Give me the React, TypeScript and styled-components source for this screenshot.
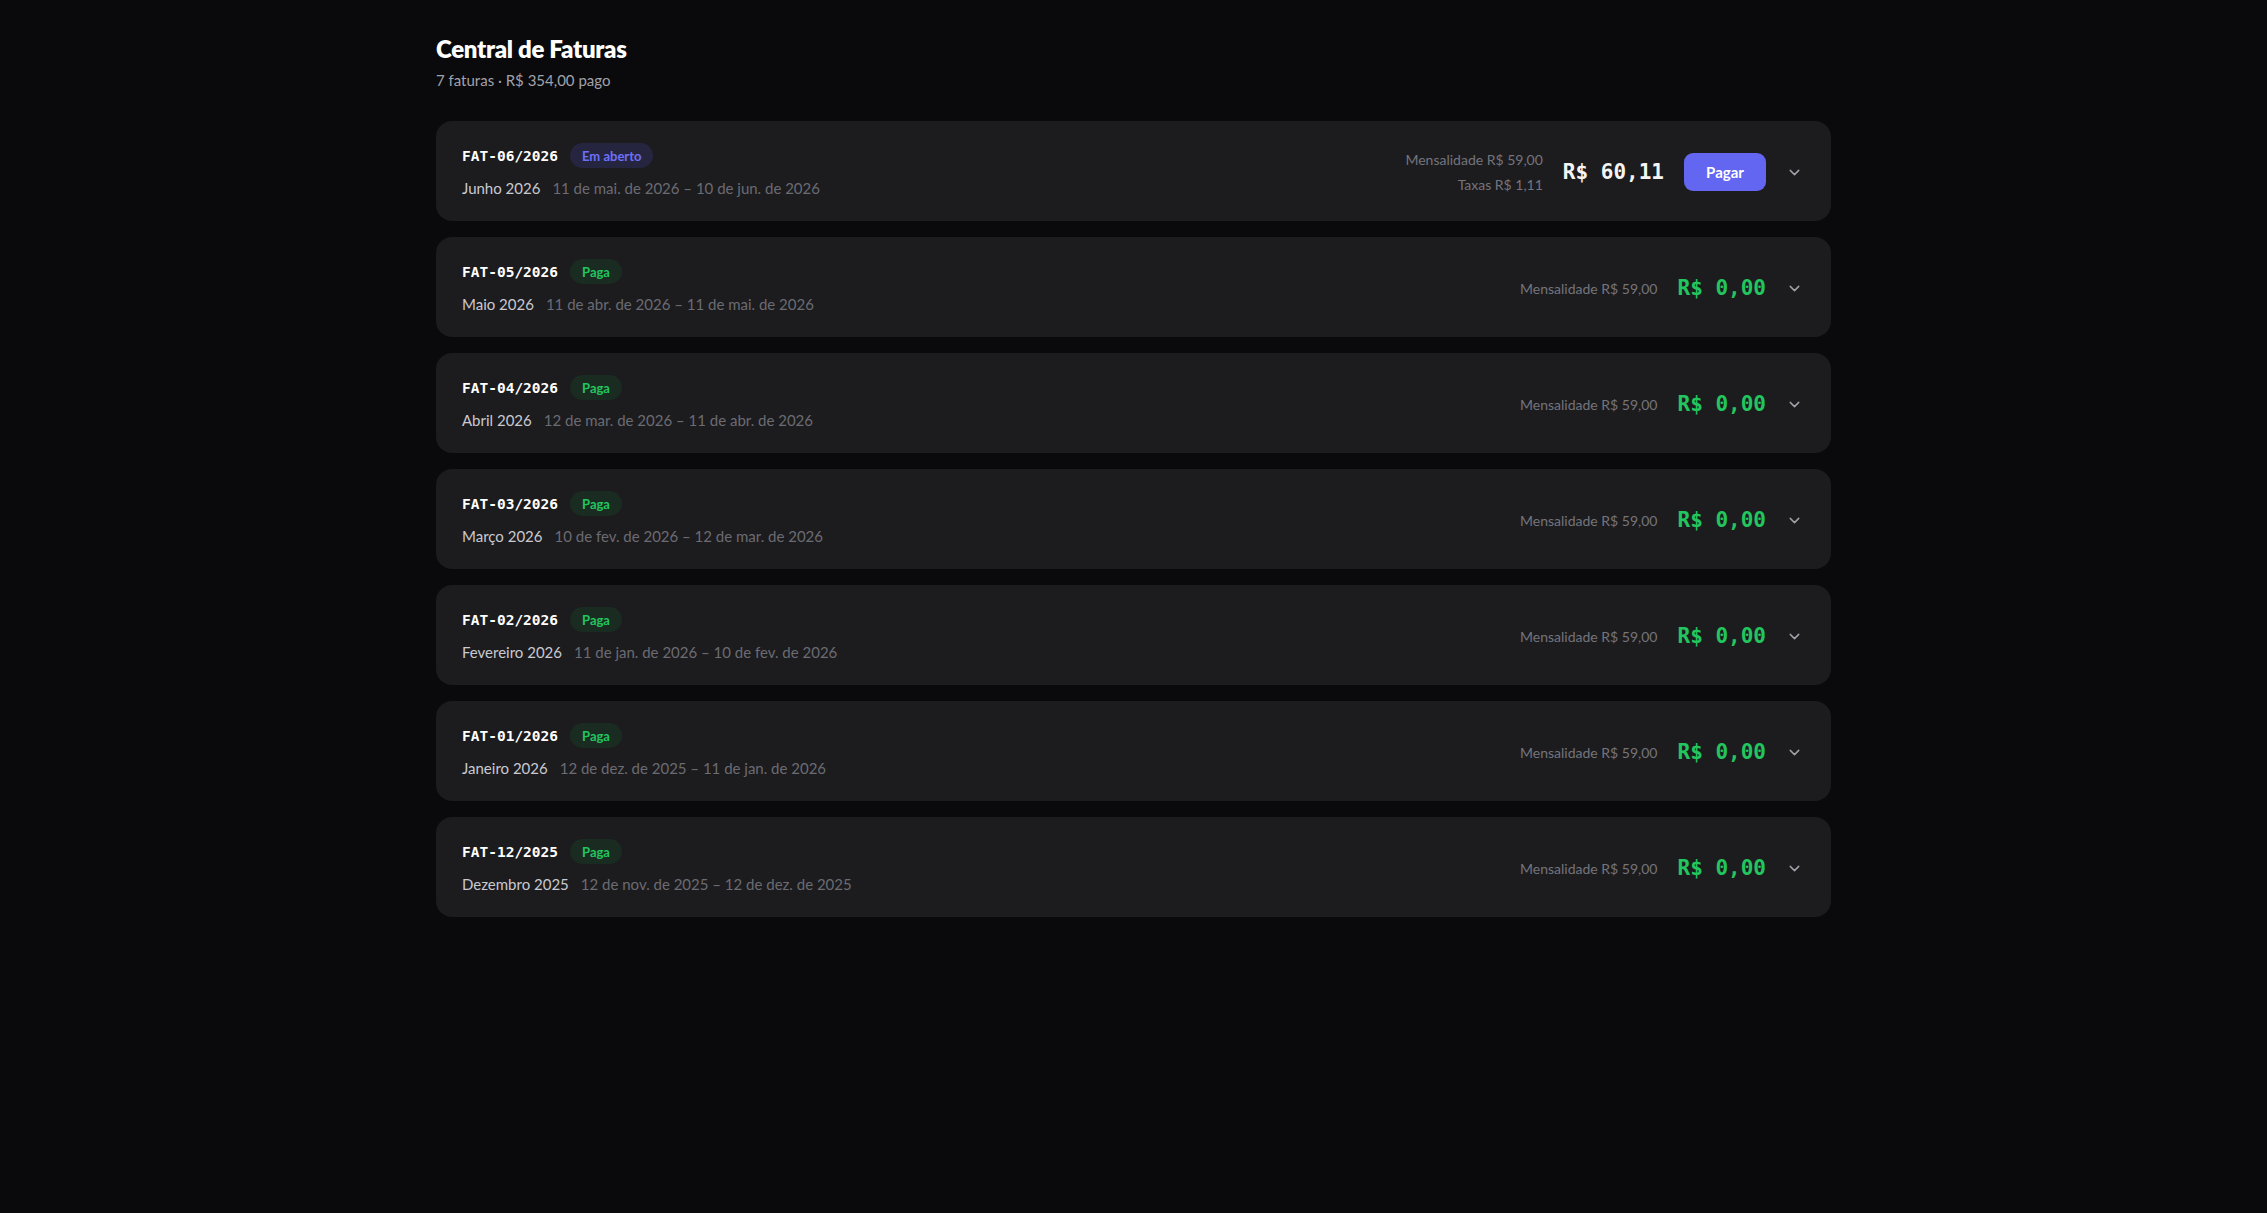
import React from 'react';
import styled, { createGlobalStyle } from 'styled-components';
import { ChevronDown } from 'lucide-react';

const GlobalStyle = createGlobalStyle`
  body {
    margin: 0;
    background: #0a0a0c;
    color: #f4f4f5;
    font-family: Lato, "Noto Sans", sans-serif;
  }
`;

const Page = styled.main`
  width: 1395px;
  margin: 0 auto;
  padding: 34px 0 60px;
  box-sizing: border-box;
`;

const Header = styled.header`
  margin-bottom: 31px;
`;

const Title = styled.h1`
  margin: 0;
  font-size: 24px;
  line-height: 30px;
  font-weight: 800;
  letter-spacing: -0.3px;
  color: #ffffff;
`;

const Subtitle = styled.p`
  margin: 6px 0 0;
  font-size: 15px;
  line-height: 20px;
  color: #a1a1aa;
`;

const List = styled.div`
  display: flex;
  flex-direction: column;
  gap: 16px;
`;

const Card = styled.div`
  display: flex;
  align-items: center;
  justify-content: space-between;
  height: 100px;
  padding: 0 28px 0 26px;
  box-sizing: border-box;
  background: #1c1c1e;
  border-radius: 16px;
`;

const Info = styled.div`
  display: flex;
  flex-direction: column;
  gap: 11px;
  margin-top: -2px;
`;

const TopLine = styled.div`
  display: flex;
  align-items: center;
  gap: 12px;
`;

const Code = styled.span`
  font-family: "DejaVu Sans Mono", "Liberation Mono", monospace;
  font-weight: 700;
  font-size: 14.5px;
  color: #ffffff;
`;

const Badge = styled.span<{ $open?: boolean }>`
  display: inline-flex;
  align-items: center;
  height: 25px;
  padding: 0 12px;
  border-radius: 999px;
  font-size: 13px;
  font-weight: 700;
  color: ${p => (p.$open ? '#6d70f7' : '#22c55e')};
  background: ${p => (p.$open ? '#26253f' : '#1a2b21')};
`;

const Period = styled.div`
  display: flex;
  align-items: baseline;
  gap: 12px;
  font-size: 15px;
`;

const Month = styled.span`
  color: #c9c9d1;
`;

const Range = styled.span`
  color: #6b6b73;
`;

const Side = styled.div`
  display: flex;
  align-items: center;
  gap: 20px;
  margin-top: 2px;
`;

const Breakdown = styled.div`
  display: flex;
  flex-direction: column;
  align-items: flex-end;
  gap: 8px;
  font-size: 14px;
  color: #74747c;
`;

const Amount = styled.span<{ $paid?: boolean }>`
  font-family: "DejaVu Sans Mono", "Liberation Mono", monospace;
  font-weight: 700;
  font-size: 21px;
  color: ${p => (p.$paid ? '#22c55e' : '#f4f4f5')};
`;

const PayButton = styled.button`
  width: 82px;
  height: 38px;
  border: none;
  border-radius: 9px;
  background: #6366f1;
  color: #ffffff;
  font-family: inherit;
  font-size: 15px;
  font-weight: 700;
  cursor: pointer;
`;

const Toggle = styled.span`
  display: inline-flex;
  color: #a1a1aa;
`;

interface Invoice {
  code: string;
  month: string;
  range: string;
  open?: boolean;
  fees?: string;
  total: string;
}

const invoices: Invoice[] = [
  { code: 'FAT-06/2026', month: 'Junho 2026', range: '11 de mai. de 2026 – 10 de jun. de 2026', open: true, fees: 'Taxas R$ 1,11', total: 'R$ 60,11' },
  { code: 'FAT-05/2026', month: 'Maio 2026', range: '11 de abr. de 2026 – 11 de mai. de 2026', total: 'R$ 0,00' },
  { code: 'FAT-04/2026', month: 'Abril 2026', range: '12 de mar. de 2026 – 11 de abr. de 2026', total: 'R$ 0,00' },
  { code: 'FAT-03/2026', month: 'Março 2026', range: '10 de fev. de 2026 – 12 de mar. de 2026', total: 'R$ 0,00' },
  { code: 'FAT-02/2026', month: 'Fevereiro 2026', range: '11 de jan. de 2026 – 10 de fev. de 2026', total: 'R$ 0,00' },
  { code: 'FAT-01/2026', month: 'Janeiro 2026', range: '12 de dez. de 2025 – 11 de jan. de 2026', total: 'R$ 0,00' },
  { code: 'FAT-12/2025', month: 'Dezembro 2025', range: '12 de nov. de 2025 – 12 de dez. de 2025', total: 'R$ 0,00' },
];

const InvoiceRow: React.FC<{ invoice: Invoice }> = ({ invoice }) => (
  <Card>
    <Info>
      <TopLine>
        <Code>{invoice.code}</Code>
        <Badge $open={invoice.open}>{invoice.open ? 'Em aberto' : 'Paga'}</Badge>
      </TopLine>
      <Period>
        <Month>{invoice.month}</Month>
        <Range>{invoice.range}</Range>
      </Period>
    </Info>
    <Side>
      <Breakdown>
        <span>Mensalidade R$ 59,00</span>
        {invoice.fees && <span>{invoice.fees}</span>}
      </Breakdown>
      <Amount $paid={!invoice.open}>{invoice.total}</Amount>
      {invoice.open && <PayButton>Pagar</PayButton>}
      <Toggle>
        <ChevronDown size={17} strokeWidth={2} />
      </Toggle>
    </Side>
  </Card>
);

export default function App() {
  return (
    <>
      <GlobalStyle />
      <Page>
        <Header>
          <Title>Central de Faturas</Title>
          <Subtitle>7 faturas · R$ 354,00 pago</Subtitle>
        </Header>
        <List>
          {invoices.map(inv => (
            <InvoiceRow key={inv.code} invoice={inv} />
          ))}
        </List>
      </Page>
    </>
  );
}
